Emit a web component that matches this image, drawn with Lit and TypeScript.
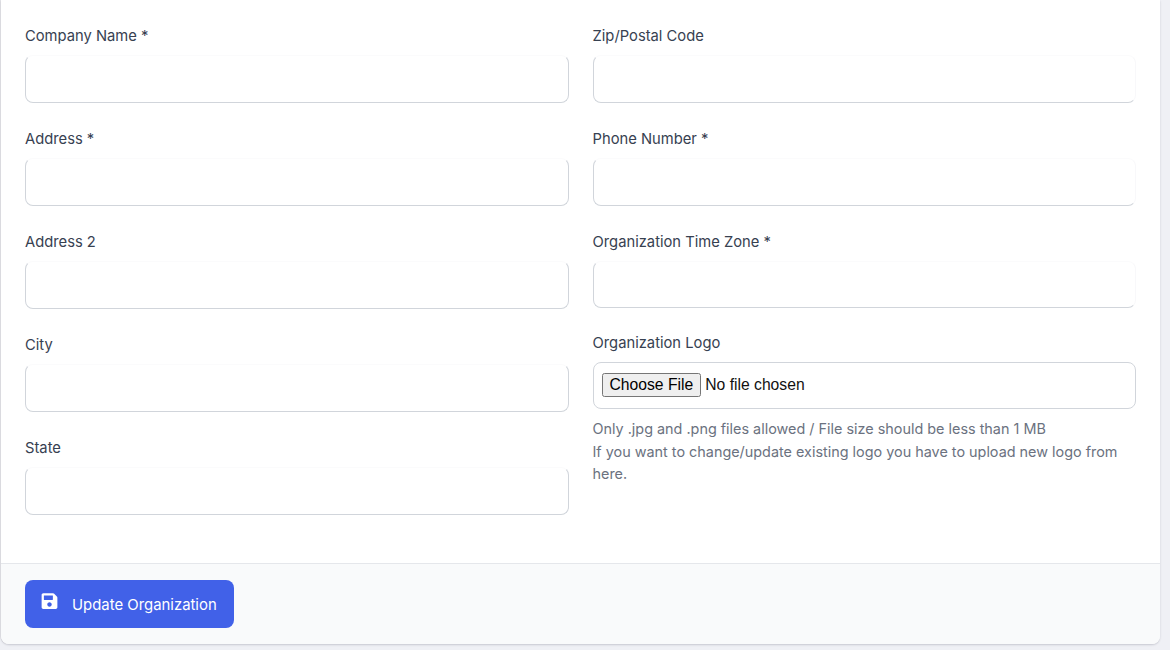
import { LitElement, html, css } from "lit";
import { customElement } from "lit/decorators.js";

@customElement("app-root")
export class AppRoot extends LitElement {
  static styles = css`
    :host { display: block; width: 1170px; height: 650px; background: #eff0f5; font-family: Inter, "Liberation Sans", sans-serif; overflow: hidden; }
    * { box-sizing: border-box; }
    .card { height: 644px; margin-left: 1px; width: 1159px; background: #fff; border-radius: 0 0 8px 8px; box-shadow: 0 1px 2px rgba(60,60,80,.22), -1px 0 0 #e4e4e8; display: flex; flex-direction: column; overflow: hidden; }
    .body { height: 563px; padding: 26px 24px 0; display: grid; grid-template-columns: 1fr 1fr; column-gap: 24px; }
    .col { display: flex; flex-direction: column; min-width: 0; }
    .field { display: flex; flex-direction: column; gap: 9px; margin-bottom: 26px; }
    label { font-size: 14.75px; font-weight: 400; line-height: 20px; color: #374151; white-space: nowrap; }
    .input { display: block; height: 48px; border: 1px solid #d1d5db; border-top-color: #fbfbfc; border-radius: 8px; background: #fff; padding: 0; outline: none; width: 100%; }
    .right .input { border-right-color: #f8f8fa; }
    .short { height: 47px; }
    .file { height: 47px; border: 1px solid #d1d5db; border-radius: 8px; padding: 0 8px 2px; display: flex; align-items: center; }
    .file input { font-family: "Liberation Sans", Arial, sans-serif; font-size: 15.7px; color: #111; width: 100%; }
    .hint { margin-top: 9px; font-size: 14.4px; line-height: 22.5px; color: #6b7280; }
    .right .logo { margin-top: -1px; margin-bottom: 0; }
    .footer { flex: 1; background: #f9fafb; border-top: 1px solid #e5e7eb; padding: 16px 24px; }
    button { display: inline-flex; align-items: center; gap: 14px; width: 209px; height: 48px; padding: 2px 16px 0; background: #4161e8; border: 0; border-radius: 8px; color: #fff; font: 400 14.9px Inter, "Liberation Sans", sans-serif; }
    button svg { width: 17px; height: 18px; margin-top: -8px; flex: none; }
    button span { white-space: nowrap; }
  `;

  private field(name: string, cls = "") {
    return html`<div class="field"><label>${name}</label><input class="input ${cls}" type="text" /></div>`;
  }

  render() {
    return html`<div class="card">
      <div class="body">
        <div class="col">
          ${this.field("Company Name *")}
          ${this.field("Address *")}
          ${this.field("Address 2")}
          ${this.field("City")}
          ${this.field("State")}
        </div>
        <div class="col right">
          ${this.field("Zip/Postal Code")}
          ${this.field("Phone Number *")}
          ${this.field("Organization Time Zone *", "short")}
          <div class="field logo">
            <label>Organization Logo</label>
            <div class="file"><input type="file" /></div>
          </div>
          <div class="hint">Only .jpg and .png files allowed / File size should be less than 1 MB<br />If you want to change/update existing logo you have to upload new logo from here.</div>
        </div>
      </div>
      <div class="footer">
        <button type="button">
          <svg viewBox="0 0 448 512" fill="currentColor"><path d="M433.9 129.9l-83.9-83.9A48 48 0 0 0 316.1 32H48C21.5 32 0 53.5 0 80v352c0 26.5 21.5 48 48 48h352c26.5 0 48-21.5 48-48V163.9a48 48 0 0 0-14.1-34zM224 416c-35.3 0-64-28.7-64-64s28.7-64 64-64 64 28.7 64 64-28.7 64-64 64zm96-304.5V212c0 6.6-5.4 12-12 12H76c-6.6 0-12-5.4-12-12V108c0-6.6 5.4-12 12-12h228.5c3.2 0 6.2 1.3 8.5 3.5l3.5 3.5c2.2 2.3 3.5 5.3 3.5 8.5z"/></svg>
          <span>Update Organization</span>
        </button>
      </div>
    </div>`;
  }
}
